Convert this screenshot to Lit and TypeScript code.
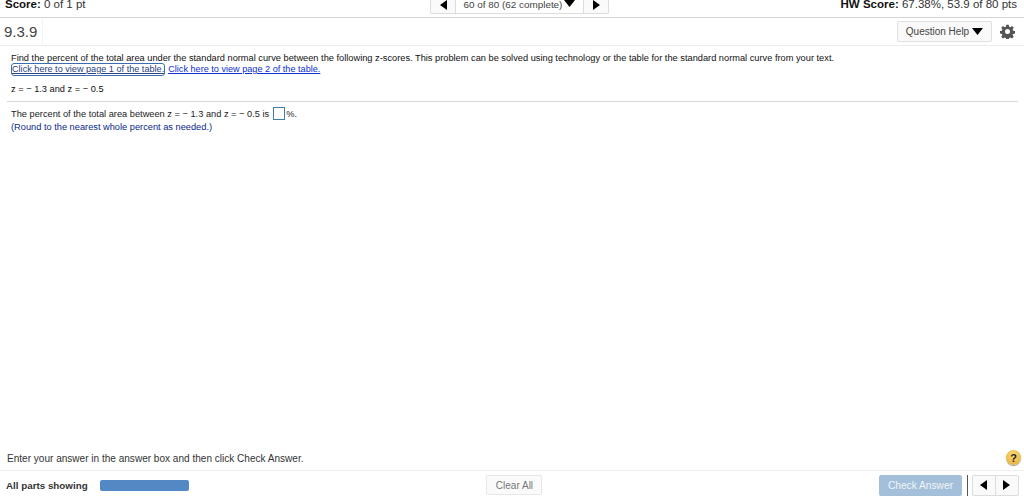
import { LitElement, html, css, svg } from "lit";
import { customElement } from "lit/decorators.js";

const left = svg`<svg width="7" height="10" viewBox="0 0 7 10"><path d="M7 0V10L0 5Z" fill="#000"/></svg>`;
const right = svg`<svg width="7" height="10" viewBox="0 0 7 10"><path d="M0 0V10L7 5Z" fill="#000"/></svg>`;
const down = svg`<svg width="11" height="7" viewBox="0 0 11 7"><path d="M0 0H11L5.5 7Z" fill="#000"/></svg>`;

@customElement("app-root")
export class AppRoot extends LitElement {
  static styles = css`
    :host { display: flex; flex-direction: column; height: 501px; width: 1024px; overflow: hidden; font-family: "Liberation Sans", Arial, sans-serif; color: #111; background: #fff; }
    .top { height: 17px; flex: none; border-bottom: 1px solid #d3d3da; display: grid; grid-template-columns: 1fr 180px 1fr; padding: 0 7px 0 5px; overflow: hidden; align-items: start; font-size: 11.5px; color: #333; }
    .top b { color: #111; }
    .score, .hw { margin-top: -2px; line-height: 13px; }
    .hw { text-align: right; }
    .pager { display: flex; height: 13px; width: 177px; margin-left: 9px; border: 1px solid #ddd; border-top: 0; border-radius: 0 0 2px 2px; background: #fafafa; font-size: 9.9px; color: #444; box-sizing: content-box; }
    .pager .arrow { width: 24px; display: flex; align-items: center; justify-content: center; }
    .pager .arrow svg { margin-top: -3px; }
    .pager .mid { flex: 1; display: flex; align-items: flex-start; justify-content: center; gap: 2px; border-left: 1px solid #ddd; border-right: 1px solid #ddd; background: #fff; line-height: 9px; }
    .head { height: 27px; flex: none; border-bottom: 1px solid #ececec; display: flex; align-items: center; }
    .num { width: 43px; height: 100%; box-sizing: border-box; border-right: 1px solid #f3f3f3; padding-left: 4px; font-size: 15px; line-height: 27px; color: #444; }
    .help { margin-left: auto; width: 95px; height: 21px; box-sizing: border-box; border: 1px solid #e0e0e0; border-radius: 2px; background: #f9f9f9; display: flex; align-items: center; justify-content: center; gap: 3px; font-size: 10px; color: #444; }
    .gear { margin: 0 9px 0 8px; display: block; }
    .body { flex: 1; padding: 0 6px 0 7px; font-size: 9.26px; color: #111; }
    .q { padding: 6px 0 0 4px; line-height: 12px; }
    .links { display: flex; gap: 4px; line-height: 11px; margin-left: 1px; font-size: 9.15px; }
    a { color: #0b2fd0; text-decoration: underline; }
    a.focus { outline: 1.5px solid #3a6cae; border-radius: 2px; color: #28417e; }
    .eq { padding: 8px 0 0 4px; line-height: 12px; margin-bottom: 6px; }
    .rule { height: 1px; background: #d8d8de; }
    .ans { padding: 5px 0 0 4px; line-height: 12px; display: flex; align-items: center; color: #222; }
    .box { width: 10px; height: 11px; border: 1px solid #3f7fae; margin: 0 1px 0 4px; }
    .hint { padding: 1px 0 0 4px; line-height: 12px; color: #0a1f8a; }
    .inst { height: 26px; flex: none; display: flex; align-items: center; justify-content: space-between; padding: 2px 3px 0 7px; box-sizing: border-box; border-bottom: 1px solid #eee; font-size: 10.05px; color: #333; }
    .q-ico { width: 15px; height: 15px; margin-top: -2px; border-radius: 50%; background: radial-gradient(circle at 50% 35%, #fbd97a, #e6a92c); box-shadow: 0 1px 1px #999; display: flex; align-items: center; justify-content: center; font-size: 11px; font-weight: bold; color: #222; }
    .foot { height: 30px; flex: none; display: grid; grid-template-columns: 1fr 1fr 1fr; align-items: center; padding: 0 5px 2px 6px; box-sizing: border-box; }
    .parts { display: flex; align-items: center; gap: 12px; font-size: 9.8px; font-weight: bold; color: #333; }
    .bar { width: 89px; height: 11px; background: #5289c4; border-radius: 2px; }
    .clear { justify-self: center; width: 56px; height: 20px; margin-left: 4px; box-sizing: border-box; border: 1px solid #e8e8e8; border-radius: 2px; background: #fafafa; color: #777; font-size: 10px; display: flex; align-items: center; justify-content: center; }
    .acts { display: flex; align-items: center; justify-content: flex-end; }
    .check { width: 83px; height: 21px; background: #a3bfd9; border-radius: 2px; color: #f2f6fa; font-size: 10.2px; display: flex; align-items: center; justify-content: center; }
    .sep { width: 1px; height: 21px; background: #555; margin: 0 4px 0 5px; }
    .nav { display: flex; width: 47px; height: 21px; box-sizing: border-box; border: 1px solid #ddd; border-radius: 2px; background: #fafafa; }
    .nav span { flex: 1; display: flex; align-items: center; justify-content: center; }
    .nav span + span { border-left: 1px solid #ddd; }
  `;

  render() {
    return html`
      <div class="top">
        <div class="score"><b>Score:</b> 0 of 1 pt</div>
        <div class="pager">
          <span class="arrow">${left}</span>
          <span class="mid">60 of 80 (62 complete) ${down}</span>
          <span class="arrow">${right}</span>
        </div>
        <div class="hw"><b>HW Score:</b> 67.38%, 53.9 of 80 pts</div>
      </div>
      <div class="head">
        <div class="num">9.3.9</div>
        <div class="help">Question Help ${down}</div>
        <svg class="gear" width="15" height="15" viewBox="0 0 24 24">
          <path fill="#555" fill-rule="evenodd" d="M10 1h4l.6 3.2 1.9.8 2.7-1.8 2.8 2.8-1.8 2.7.8 1.9 3 .6v4l-3 .6-.8 1.9 1.8 2.7-2.8 2.8-2.7-1.8-1.9.8-.6 3h-4l-.6-3-1.9-.8-2.7 1.8-2.8-2.8 1.8-2.7-.8-1.9-3-.6v-4l3-.6.8-1.9L2 6l2.8-2.8 2.7 1.8 1.9-.8L10 1Zm2 7a4 4 0 1 0 0 8 4 4 0 0 0 0-8Z"/>
        </svg>
      </div>
      <div class="body">
        <div class="q">
          <div>Find the percent of the total area under the standard normal curve between the following z-scores. This problem can be solved using technology or the table for the standard normal curve from your text.</div>
          <div class="links"><a class="focus">Click here to view page 1 of the table.</a><a>Click here to view page 2 of the table.</a></div>
        </div>
        <div class="eq">z = − 1.3 and z = − 0.5</div>
        <div class="rule"></div>
        <div class="ans">The percent of the total area between z = − 1.3 and z = − 0.5 is <span class="box"></span>%.</div>
        <div class="hint">(Round to the nearest whole percent as needed.)</div>
      </div>
      <div class="inst">
        <span>Enter your answer in the answer box and then click Check Answer.</span>
        <span class="q-ico">?</span>
      </div>
      <div class="foot">
        <div class="parts">All parts showing <span class="bar"></span></div>
        <div class="clear">Clear All</div>
        <div class="acts">
          <div class="check">Check Answer</div>
          <span class="sep"></span>
          <div class="nav"><span>${left}</span><span>${right}</span></div>
        </div>
      </div>
    `;
  }
}
